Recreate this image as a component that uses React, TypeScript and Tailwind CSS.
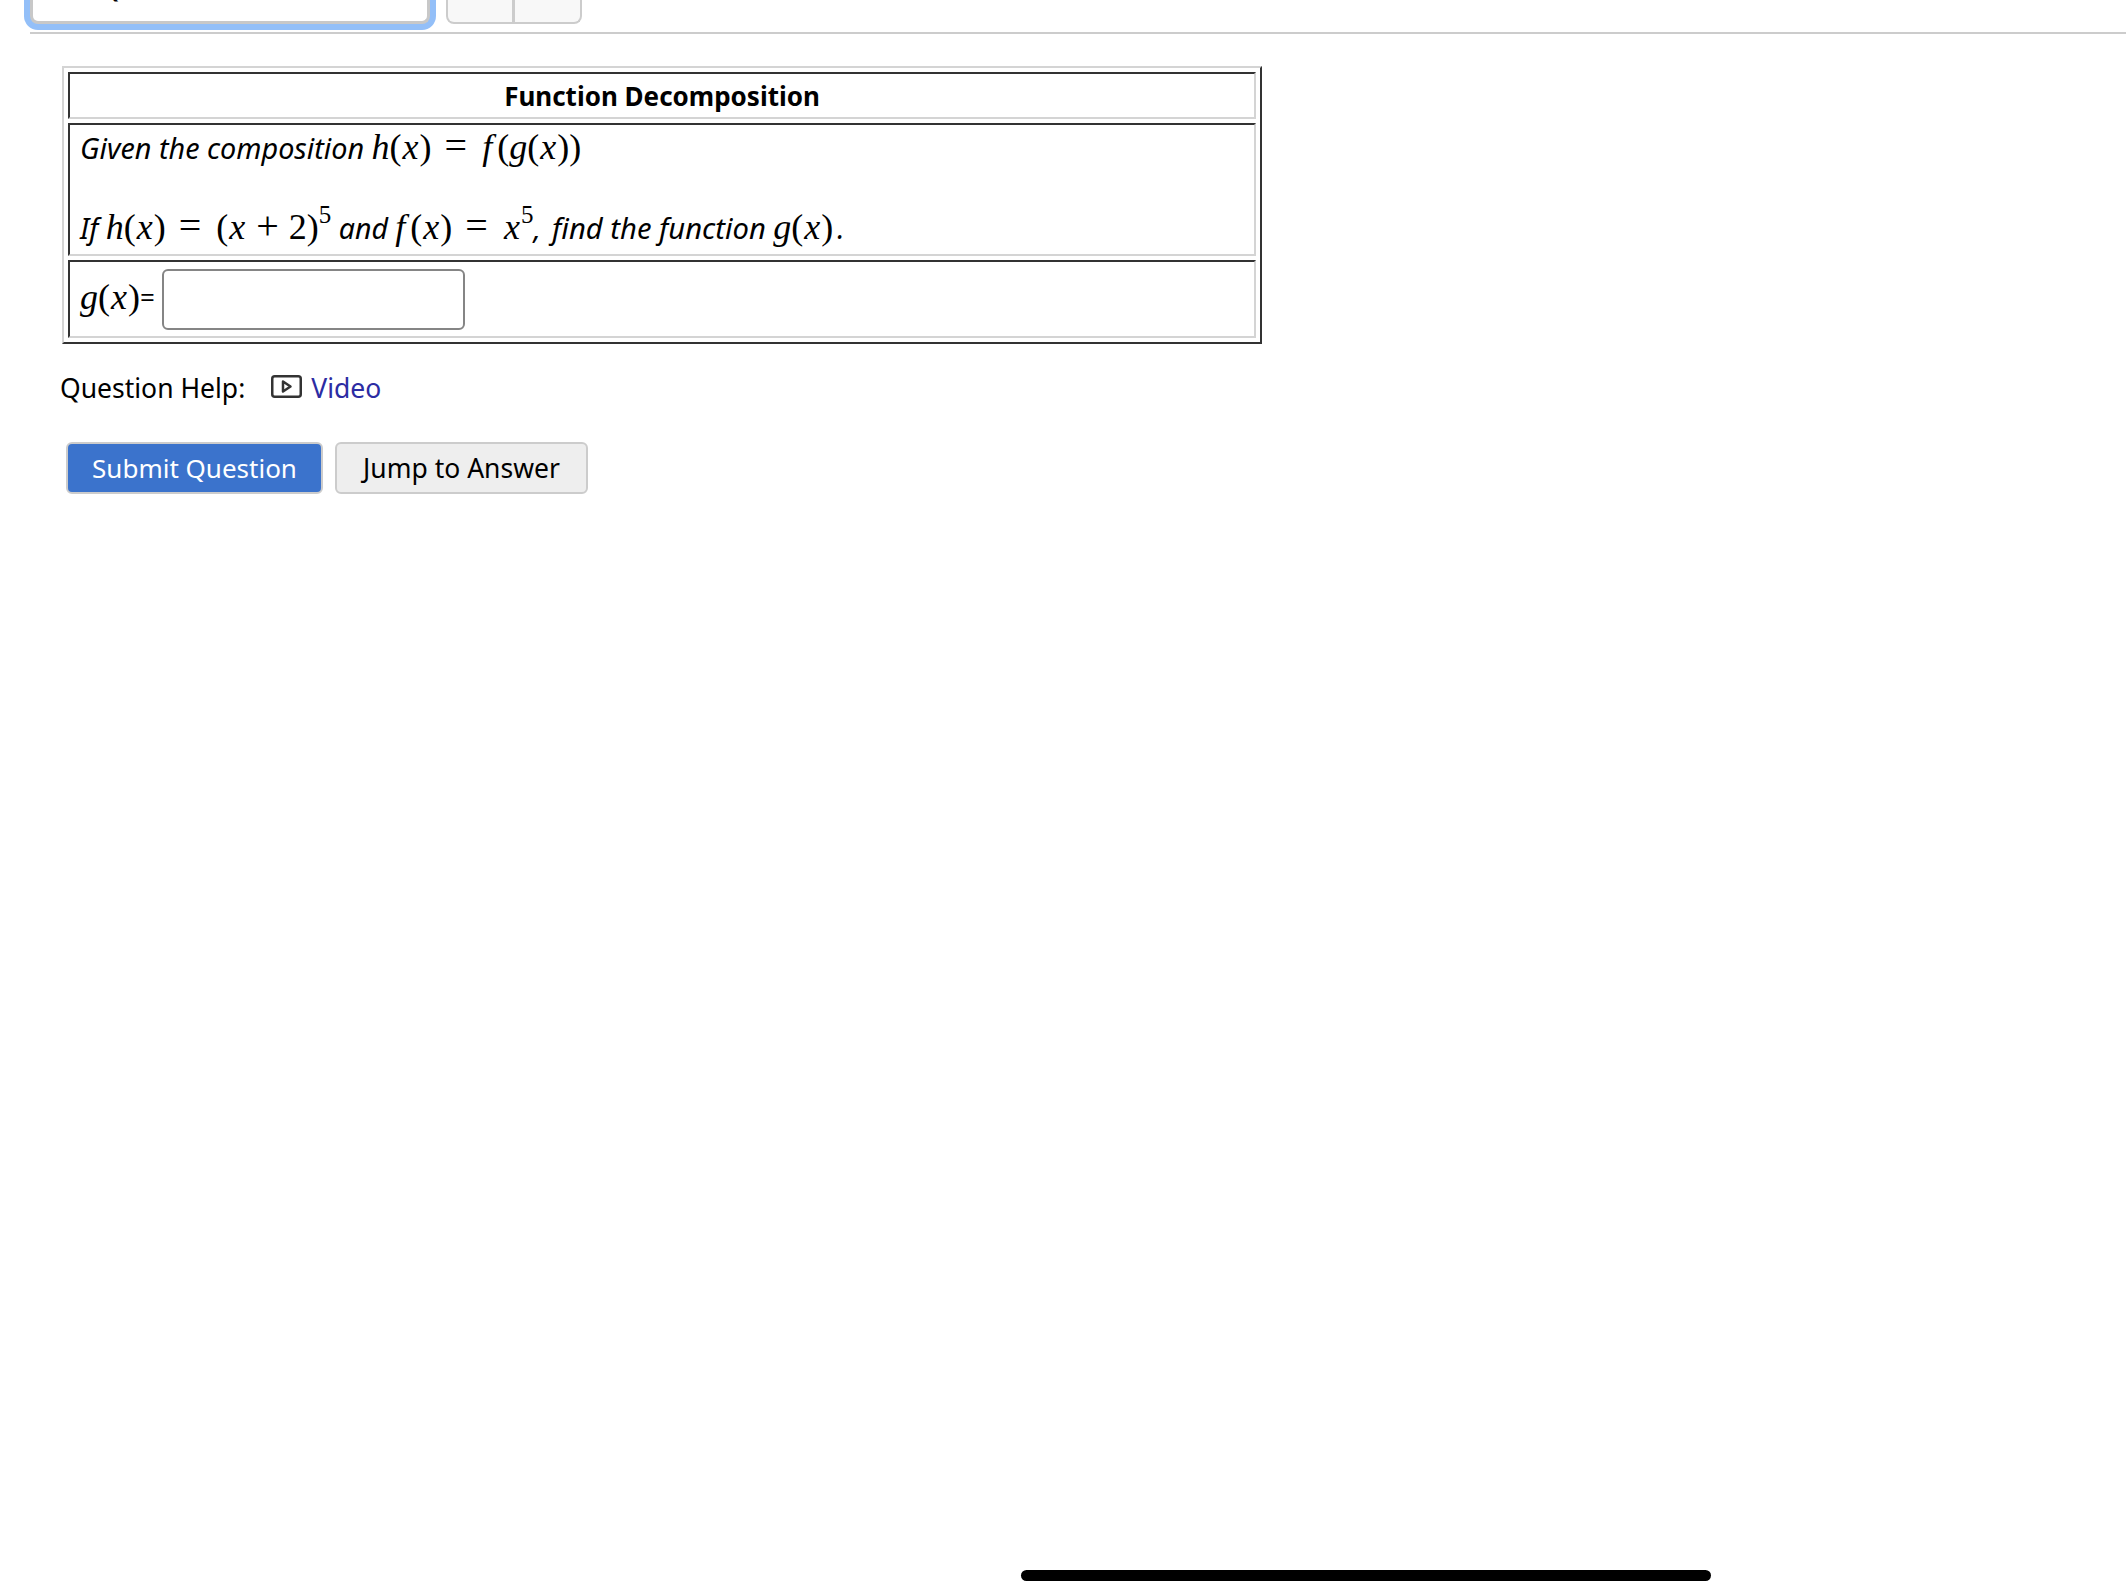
import type { ReactNode } from 'react';

const SANS = 'font-["Noto_Sans","Open_Sans",sans-serif]';

// serif italic for the typeset math variables
const V = ({ children, className = '' }: { children: ReactNode; className?: string }) => (
  <span className={`font-["Liberation_Serif",serif] text-[36px] italic ${className}`}>{children}</span>
);

// upright math glyphs: parens, digits, operators
const R = ({ children, className = '' }: { children: ReactNode; className?: string }) => (
  <span className={`font-["Liberation_Serif",serif] text-[36px] not-italic ${className}`}>{children}</span>
);

const Eq = () => (
  <span className='ml-[13px] mr-[15px] font-["Liberation_Serif",serif] text-[40px] not-italic'>=</span>
);

const Plus = () => (
  <span className='mx-[10px] font-["Liberation_Serif",serif] text-[40px] not-italic'>+</span>
);

const X = () => <V className="mx-[1px]">x</V>;

const Sup = ({ children }: { children: ReactNode }) => (
  <span className='relative top-[-16px] font-["Liberation_Serif",serif] text-[25px] not-italic leading-none'>
    {children}
  </span>
);

const Call = ({ name, arg }: { name: string; arg: ReactNode }) => (
  <span>
    <V className={name === 'f' ? 'mr-[5px]' : ''}>{name}</V>
    <R>(</R>
    {arg}
    <R>)</R>
  </span>
);

const PlayIcon = () => (
  <svg width="31" height="23" viewBox="0 0 31 23" fill="none" className="-mt-[6px] shrink-0">
    <rect x="1.25" y="1.25" width="28.5" height="20.5" rx="2.5" stroke="#333" strokeWidth="2.5" />
    <path d="M12 6.5 L19.5 11.5 L12 16.5 Z" stroke="#333" strokeWidth="2.5" strokeLinejoin="round" />
  </svg>
);

export default function App() {
  return (
    <div className={`relative h-[1596px] w-full overflow-hidden bg-white text-black ${SANS}`}>
      {/* Toolbar remainder at the top edge */}
      <div className="ml-[30px] flex h-[34px] items-start gap-[16px] border-b-2 border-[#cccccc]">
        <div className="relative h-[24px] w-[400px] rounded-b-[8px] border-x-[3px] border-b-[3px] border-[#c8c8c8] bg-white shadow-[0_0_0_6px_#93bff8]">
          <span className="absolute left-[66px] top-[-34px] text-[28px] leading-[40px]">Q</span>
        </div>
        <div className="flex h-[24px] w-[136px] rounded-b-[8px] border-x-2 border-b-2 border-[#cccccc] bg-[#f8f8f8]">
          <div className="w-[67px] border-r-[3px] border-[#cccccc]" />
        </div>
      </div>

      {/* Question table */}
      <table className="ml-[62px] mt-[32px] w-[1200px] border-separate border-spacing-[4px] border-2 border-b-[#333333] border-l-[#d4d4d4] border-r-[#333333] border-t-[#d4d4d4]">
        <tbody>
          <tr>
            <th className="h-[47px] border-2 border-b-[#d4d4d4] border-l-[#333333] border-r-[#d4d4d4] border-t-[#333333] p-0 pt-[2px] text-center text-[26px] font-bold">
              Function Decomposition
            </th>
          </tr>
          <tr>
            <td className="h-[133px] border-2 border-b-[#d4d4d4] border-l-[#333333] border-r-[#d4d4d4] border-t-[#333333] px-[10px] pb-[6px] pt-[1px] align-top text-[28.5px] italic leading-[40px]">
              <div className="h-[80px] text-[28.8px]">
                Given the composition <Call name="h" arg={<X />} />
                <Eq />
                <Call name="f" arg={<Call name="g" arg={<X />} />} />
              </div>
              <div>
                If <Call name="h" arg={<X />} />
                <Eq />
                <R>(</R>
                <X />
                <Plus />
                <R>2)</R>
                <Sup>5</Sup> and <Call name="f" arg={<X />} />
                <Eq />
                <X />
                <Sup>5</Sup>
                <span className="mr-[4px]">,</span> <span className="text-[29.2px]">find the function</span>{' '}
                <Call name="g" arg={<X />} />
                <span className="ml-[4px]">.</span>
              </div>
            </td>
          </tr>
          <tr>
            <td className="h-[78px] border-2 border-b-[#d4d4d4] border-l-[#333333] border-r-[#d4d4d4] border-t-[#333333] px-[10px] py-0">
              <div className="flex items-center">
                <span className="-mt-[4px] flex items-center">
                  <Call name="g" arg={<X />} />
                  <span className="text-[26px]">=</span>
                </span>
                <input
                  type="text"
                  className="ml-[7px] h-[61px] w-[303px] rounded-[6px] border-2 border-[#858585] bg-white outline-none"
                />
              </div>
            </td>
          </tr>
        </tbody>
      </table>

      {/* Help links */}
      <div className="ml-[60px] mt-[24px] flex h-[42px] items-center text-[26.5px]">
        <span>Question Help:</span>
        <span className="ml-[26px] flex items-center">
          <PlayIcon />
          <a className="ml-[9px] text-[#2c2ca3]">Video</a>
        </span>
      </div>

      {/* Actions */}
      <div className="ml-[66px] mt-[32px] flex gap-[12px] text-[26.5px]">
        <button className="flex h-[52px] w-[257px] items-center justify-center rounded-[6px] border-2 border-[#cccccc] bg-[#3b73cc] text-[26px] text-white">
          Submit Question
        </button>
        <button className="flex h-[52px] w-[253px] items-center justify-center rounded-[6px] border-2 border-[#cccccc] bg-[#eeeeee] pt-[1px] text-black">
          Jump to Answer
        </button>
      </div>

      {/* Home indicator */}
      <div className="absolute bottom-[15px] left-[1021px] h-[11px] w-[690px] rounded-full bg-black" />
    </div>
  );
}
